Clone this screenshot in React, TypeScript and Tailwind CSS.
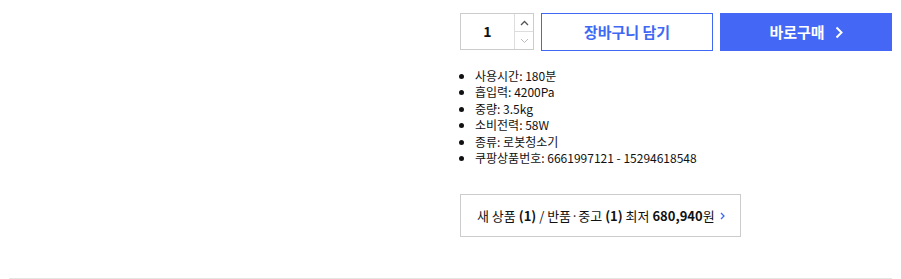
import React from 'react';

const specs = [
  '사용시간: 180분',
  '흡입력: 4200Pa',
  '중량: 3.5kg',
  '소비전력: 58W',
  '종류: 로봇청소기',
  '쿠팡상품번호: 6661997121 - 15294618548',
];

function QuantityBox() {
  return (
    <div className="flex h-[37px] w-[74px] border border-[#cccccc]">
      <div className="flex flex-1 items-center justify-center text-[14px] font-bold text-[#111111]">1</div>
      <div className="flex w-[19px] flex-col border-l border-[#dddddd]">
        <button className="flex flex-1 items-center justify-center border-b border-[#dddddd]">
          <svg width="9" height="6" viewBox="0 0 9 6" fill="none" stroke="#555" strokeWidth="1.3">
            <path d="M1 5 L4.5 1.5 L8 5" />
          </svg>
        </button>
        <button className="flex flex-1 items-center justify-center">
          <svg width="9" height="6" viewBox="0 0 9 6" fill="none" stroke="#bbb" strokeWidth="1">
            <path d="M1 1 L4.5 4.5 L8 1" />
          </svg>
        </button>
      </div>
    </div>
  );
}

export default function App() {
  return (
    <div
      className="w-[901px] bg-white text-[#111111]"
      style={{ fontFamily: '"Noto Sans CJK KR", "Liberation Sans", sans-serif' }}
    >
      <div className="mx-[9px] flex border-b border-[#e5e5e5] pt-[13px] pb-[41px]">
        <div className="w-[451px]" />
        <div className="flex-1">
          <div className="flex gap-[7px]">
            <QuantityBox />
            <button className="flex h-[38px] w-[172px] items-center justify-center border border-[#3f68f5] text-[15px] font-bold text-[#3f68f5]">
              장바구니 담기
            </button>
            <button className="flex h-[38px] w-[172px] items-center justify-center gap-[10px] bg-[#4468f5] text-[15px] font-bold text-white">
              바로구매
              <svg width="8" height="13" viewBox="0 0 8 13" fill="none" stroke="white" strokeWidth="2">
                <path d="M1.5 1.5 L6.5 6.5 L1.5 11.5" />
              </svg>
            </button>
          </div>

          <ul className="mt-[17px] list-disc pl-[15px] text-[12px] leading-[16.4px] text-[#111111]">
            {specs.map((s) => (
              <li key={s}>{s}</li>
            ))}
          </ul>

          <div className="mt-[28px] flex h-[43px] w-[281px] items-center whitespace-nowrap border border-[#cccccc] pl-[16px] text-[13px] text-[#111111]">
            <span>
              새 상품 <span className="font-semibold">(1)</span> / 반품·중고{' '}
              <span className="font-semibold">(1)</span> 최저 <span className="font-semibold">680,940</span>원
            </span>
            <svg className="ml-[5px]" width="5" height="8" viewBox="0 0 5 8" fill="none" stroke="#3f68f5" strokeWidth="1.3">
              <path d="M1 1 L4 4 L1 7" />
            </svg>
          </div>
        </div>
      </div>
    </div>
  );
}
